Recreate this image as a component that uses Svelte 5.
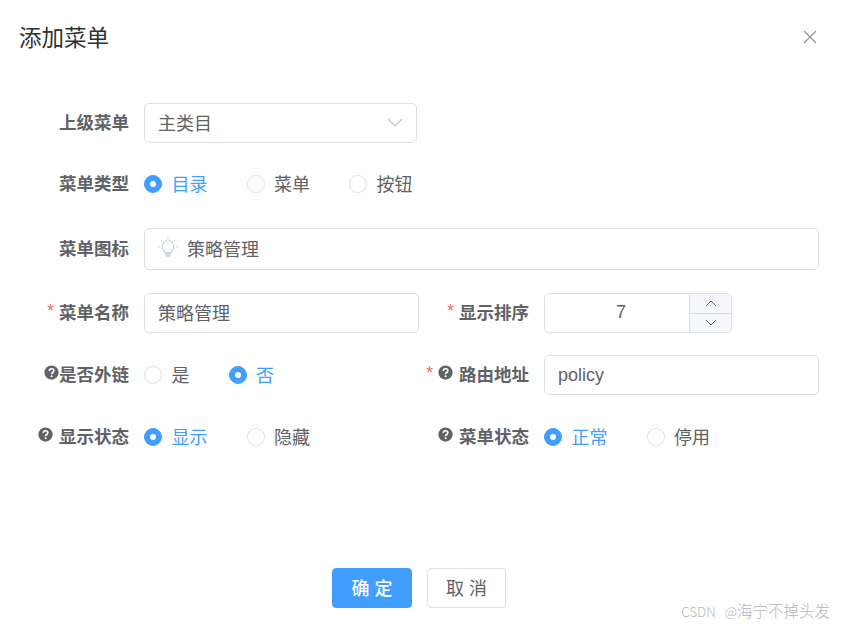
<script>
  const typeOptions = ['目录', '菜单', '按钮'];
  const linkOptions = ['是', '否'];
  const showOptions = ['显示', '隐藏'];
  const statusOptions = ['正常', '停用'];

  let menuType = $state('目录');
  let isLink = $state('否');
  let visible = $state('显示');
  let status = $state('正常');
  let sort = $state(7);
</script>

{#snippet help()}
  <svg class="help" viewBox="0 0 16 16" aria-hidden="true">
    <circle cx="8" cy="8" r="7.6" fill="#606266" />
    <path d="M5.600 6.300c0-1.400 1-2.300 2.500-2.300s2.400.9 2.400 2.100c0 1.900-2.400 1.900-2.400 3.700" fill="none" stroke="#fff" stroke-width="1.7" />
    <circle cx="8.100" cy="12" r="1.100" fill="#fff" />
  </svg>
{/snippet}

{#snippet radios(options, current, pick)}
  <div class="radios">
    {#each options as option}
      <button type="button" class="radio" class:on={current === option} onclick={() => pick(option)}>
        <span class="dot"></span>{option}
      </button>
    {/each}
  </div>
{/snippet}

<div class="dialog">
  <header>
    <h2>添加菜单</h2>
    <button class="close" aria-label="关闭">
      <svg viewBox="0 0 14 14" width="14" height="14">
        <path d="M1 1l12 12M13 1L1 13" stroke="#909399" stroke-width="1.2" fill="none" />
      </svg>
    </button>
  </header>

  <form class="form">
    <div class="row first">
      <div class="label">上级菜单</div>
      <div class="control select">
        <span>主类目</span>
        <svg viewBox="0 0 16 9" width="16" height="9">
          <path d="M1 1l7 7 7-7" stroke="#c0c4cc" stroke-width="1.2" fill="none" />
        </svg>
      </div>
    </div>

    <div class="row second">
      <div class="label">菜单类型</div>
      {@render radios(typeOptions, menuType, (v) => (menuType = v))}
    </div>

    <div class="row tall">
      <div class="label">菜单图标</div>
      <div class="control wide">
        <svg class="bulb" viewBox="0 0 22 22" width="22" height="22">
          <path d="M7.600 15.500c0-2-2.300-3-2.300-6a5.700 5.700 0 0 1 11.400 0c0 3-2.300 4-2.300 6z" fill="none" stroke="#c5cfdf" stroke-width="1.1" />
          <path d="M8 16h6v2.200c0 1-.8 1.800-1.800 1.800H9.800C8.800 20 8 19.200 8 18.200z" fill="#d3dcea" />
          <path d="M11 0.500v2M3.800 3l1.400 1.400M18.200 3l-1.400 1.400M0.500 10h2M19.500 10h2" stroke="#c5cfdf" stroke-width="1" fill="none" />
        </svg>
        <span>策略管理</span>
      </div>
    </div>

    <div class="row">
      <div class="col">
        <div class="label"><span class="star">*</span>菜单名称</div>
        <div class="control half">策略管理</div>
      </div>
      <div class="col">
        <div class="label"><span class="star">*</span>显示排序</div>
        <div class="control number">
          <span class="value">{sort}</span>
          <div class="steps">
            <button type="button" aria-label="增加" onclick={() => sort++}>
              <svg viewBox="0 0 12 7" width="12" height="7"><path d="M1 6l5-5 5 5" stroke="#606266" stroke-width="1" fill="none" /></svg>
            </button>
            <button type="button" aria-label="减少" onclick={() => sort--}>
              <svg viewBox="0 0 12 7" width="12" height="7"><path d="M1 1l5 5 5-5" stroke="#606266" stroke-width="1" fill="none" /></svg>
            </button>
          </div>
        </div>
      </div>
    </div>

    <div class="row">
      <div class="col">
        <div class="label">{@render help()}是否外链</div>
        {@render radios(linkOptions, isLink, (v) => (isLink = v))}
      </div>
      <div class="col">
        <div class="label"><span class="star">*</span>{@render help()}<span class="gap"></span>路由地址</div>
        <div class="control half latin">policy</div>
      </div>
    </div>

    <div class="row">
      <div class="col">
        <div class="label">{@render help()}<span class="gap"></span>显示状态</div>
        {@render radios(showOptions, visible, (v) => (visible = v))}
      </div>
      <div class="col">
        <div class="label">{@render help()}<span class="gap"></span>菜单状态</div>
        {@render radios(statusOptions, status, (v) => (status = v))}
      </div>
    </div>
  </form>

  <footer>
    <button class="btn primary">确定</button>
    <button class="btn">取消</button>
  </footer>

  <div class="watermark"><span class="brand">CSDN @</span>海宁不掉头发</div>
</div>

<style>
  :global(body) {
    background: #fff;
  }

  .dialog {
    position: relative;
    width: 842px;
    height: 626px;
    overflow: hidden;
    color: #606266;
    font-family: "Liberation Sans", "Noto Sans CJK SC", sans-serif;
    font-size: 18px;
  }

  header {
    display: flex;
    justify-content: space-between;
    align-items: center;
    height: 72px;
    padding: 0 25px 0 19px;
  }

  h2 {
    margin: 0;
    font-size: 22.5px;
    font-weight: 400;
    color: #303133;
  }

  button {
    font: inherit;
    color: inherit;
    background: none;
    border: none;
    padding: 0;
    cursor: pointer;
  }

  .close {
    display: flex;
    margin-top: 2px;
  }

  .form {
    padding-top: 31px;
  }

  .row {
    display: flex;
    align-items: center;
    height: 40px;
    margin-bottom: 22px;
  }

  .row.first {
    margin-bottom: 21px;
  }

  .row.second {
    margin-bottom: 24px;
  }

  .row.tall {
    height: 42px;
    margin-bottom: 23px;
  }

  .col {
    display: flex;
    align-items: center;
    height: 100%;
  }

  .col:first-child {
    width: 419px;
  }

  .col:last-child {
    width: 400px;
  }

  .label {
    display: flex;
    align-items: center;
    justify-content: flex-end;
    width: 129px;
    margin-right: 15px;
    padding-bottom: 3px;
    flex: none;
    font-size: 17.5px;
    font-weight: 700;
    white-space: nowrap;
  }

  .col:last-child .label {
    width: 110px;
  }

  .star {
    margin-right: 5px;
    color: #f56c6c;
    font-weight: 400;
  }

  .help {
    width: 15px;
    height: 15px;
    margin-top: -3px;
    flex: none;
  }

  .gap {
    width: 6px;
  }

  .control {
    display: flex;
    align-items: center;
    height: 100%;
    box-sizing: border-box;
    padding: 0 13px 2px;
    background: #fff;
    border: 1.25px solid #dcdfe6;
    border-radius: 5px;
  }

  .select {
    justify-content: space-between;
    width: 273px;
  }

  .wide {
    width: 675px;
  }

  .bulb {
    margin-right: 8px;
    margin-left: -1px;
  }

  .half {
    width: 275px;
  }

  .latin {
    padding-bottom: 0;
  }

  .number {
    width: 188px;
    padding: 0;
    overflow: hidden;
  }

  .value {
    flex: 1;
    padding: 0 0 2px 8px;
    text-align: center;
  }

  .steps {
    display: flex;
    flex-direction: column;
    flex: none;
    box-sizing: border-box;
    width: 42px;
    height: 100%;
    background: #f5f7fa;
    border-left: 1.25px solid #dcdfe6;
  }

  .steps button {
    display: flex;
    flex: 1;
    align-items: center;
    justify-content: center;
  }

  .steps button:first-child {
    border-bottom: 1.25px solid #dcdfe6;
  }

  .radios {
    display: flex;
    gap: 39px;
  }

  .radio {
    display: flex;
    align-items: center;
    gap: 9.5px;
    padding-bottom: 2px;
  }

  .radio.on {
    color: #409eff;
  }

  .dot {
    display: flex;
    align-items: center;
    justify-content: center;
    box-sizing: border-box;
    width: 18px;
    height: 18px;
    margin-top: 2px;
    background: #fff;
    border: 1.25px solid #dcdfe6;
    border-radius: 50%;
  }

  .radio.on .dot {
    background: #409eff;
    border-color: #409eff;
  }

  .radio.on .dot::after {
    content: "";
    width: 6px;
    height: 6px;
    background: #fff;
    border-radius: 50%;
  }

  footer {
    display: flex;
    justify-content: center;
    gap: 15px;
    margin-top: 111px;
    padding-right: 5px;
  }

  .btn {
    width: 79px;
    height: 40px;
    box-sizing: border-box;
    padding-bottom: 3px;
    background: #fff;
    border: 1.25px solid #dcdfe6;
    border-radius: 4px;
    letter-spacing: 5px;
    text-indent: 6px;
  }

  .btn.primary {
    width: 80px;
    color: #fff;
    font-weight: 500;
    background: #409eff;
    border-color: #409eff;
  }

  .watermark {
    position: absolute;
    right: 12px;
    bottom: 5px;
    color: #b5b5b5;
    font-size: 15.5px;
    font-family: "Noto Sans CJK SC", sans-serif;
    font-weight: 300;
  }

  .brand {
    font-size: 13.5px;
    word-spacing: 6px;
  }
</style>
